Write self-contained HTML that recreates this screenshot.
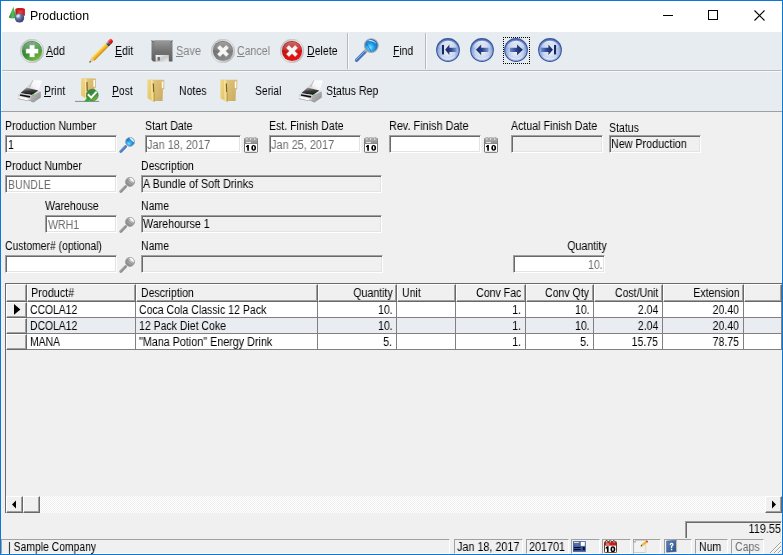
<!DOCTYPE html>
<html><head><meta charset="utf-8">
<style>
*{box-sizing:border-box;margin:0;padding:0}
html,body{width:783px;height:555px;overflow:hidden;background:#f0f0f0}
body{font-family:"Liberation Sans",sans-serif;font-size:12px;color:#000;position:relative}
#frame{position:absolute;left:0;top:0;width:783px;height:555px;border:1px solid #0a78d6;z-index:50}
#title{position:absolute;left:1px;top:1px;width:781px;height:31px;background:#fff}
#tb{position:absolute;left:2px;top:32px;width:779px;height:79px;background:#e7ecf0}
.hl{position:absolute;height:1px;background:#b9b9b9}
.vl{position:absolute;width:1px;background:#b9b9b9}
.t{position:absolute;will-change:transform;font-size:12px;line-height:14px;white-space:nowrap;transform-origin:0 0;display:block}
.g{color:#6c6c6c}
.g2{color:#838383}
.inp{position:absolute;background:#fff;border:1px solid;border-color:#a0a0a0 #fff #fff #a0a0a0;box-shadow:inset 1px 1px 0 #696969, inset -1px -1px 0 #e3e3e3}
.inp.ro{background:#f0f0f0}
.ic{position:absolute;z-index:5}
.cell{position:absolute;background:#fff;border-right:1px solid #808080;border-bottom:1px solid #808080}
.hd{position:absolute;background:#f0f0f0;border:1px solid;border-color:#fff #696969 #696969 #fff;box-shadow:inset -1px -1px 0 #a0a0a0}
.sp{position:absolute;top:539px;height:15px;border:1px solid;border-color:#a0a0a0 #fff #fff #a0a0a0}
.btn{position:absolute;background:#f0f0f0;border:1px solid;border-color:#fff #696969 #696969 #fff;box-shadow:inset -1px -1px 0 #a0a0a0}
</style></head><body>

<div id="title"></div>
<svg width="0" height="0" style="position:absolute"><defs>
<linearGradient id="ring" x1="0" y1="0" x2="1" y2="1"><stop offset="0" stop-color="#b0b0b0"/><stop offset=".5" stop-color="#f0f0f0"/><stop offset="1" stop-color="#a8a8a8"/></linearGradient>
<linearGradient id="gGreen" x1="0.2" y1="0" x2="0.8" y2="1"><stop offset="0" stop-color="#3c8446"/><stop offset=".55" stop-color="#3a8e36"/><stop offset="1" stop-color="#84c43e"/></linearGradient>
<linearGradient id="gRed" x1="0.3" y1="0" x2="0.7" y2="1"><stop offset="0" stop-color="#a81a1a"/><stop offset=".5" stop-color="#c81414"/><stop offset="1" stop-color="#f21010"/></linearGradient>
<linearGradient id="gGray" x1="0.3" y1="0" x2="0.7" y2="1"><stop offset="0" stop-color="#6a6a6a"/><stop offset=".5" stop-color="#777"/><stop offset="1" stop-color="#8e8e8e"/></linearGradient>
<linearGradient id="gGloss" x1="0" y1="0" x2="0" y2="1"><stop offset="0" stop-color="#fff" stop-opacity=".35"/><stop offset="1" stop-color="#fff" stop-opacity=".05"/></linearGradient>
<radialGradient id="navBg" cx=".5" cy=".6" r=".62"><stop offset="0" stop-color="#eef2fa"/><stop offset=".5" stop-color="#c6d4ee"/><stop offset=".78" stop-color="#87a3da"/><stop offset="1" stop-color="#4465ae"/></radialGradient>
<linearGradient id="navTop" x1="0" y1="0" x2="0" y2="1"><stop offset="0" stop-color="#fff" stop-opacity=".85"/><stop offset="1" stop-color="#fff" stop-opacity=".1"/></linearGradient>
<linearGradient id="arrL" x1="0" y1="0" x2="1" y2="0"><stop offset="0" stop-color="#16275e"/><stop offset=".5" stop-color="#2d448a"/><stop offset="1" stop-color="#7f9ad4"/></linearGradient>
<linearGradient id="arrR" x1="1" y1="0" x2="0" y2="0"><stop offset="0" stop-color="#16275e"/><stop offset=".5" stop-color="#2d448a"/><stop offset="1" stop-color="#6f8ccc"/></linearGradient>
<radialGradient id="lensB" cx=".4" cy=".65" r=".7"><stop offset="0" stop-color="#7fe4ff"/><stop offset=".45" stop-color="#1f9ae8"/><stop offset="1" stop-color="#0a55c0"/></radialGradient>
<radialGradient id="lensG" cx=".68" cy=".3" r=".8"><stop offset="0" stop-color="#dedede"/><stop offset=".45" stop-color="#a8a8a8"/><stop offset="1" stop-color="#7c7c7c"/></radialGradient>
<linearGradient id="pencil" x1="0" y1="0" x2="0" y2="1"><stop offset="0" stop-color="#fde48a"/><stop offset=".45" stop-color="#f6c02a"/><stop offset="1" stop-color="#c98a12"/></linearGradient>
<linearGradient id="eraser" x1="0" y1="0" x2="0" y2="1"><stop offset="0" stop-color="#ff7a7a"/><stop offset=".5" stop-color="#e81c1c"/><stop offset="1" stop-color="#b00c0c"/></linearGradient>
<linearGradient id="ferr" x1="0" y1="0" x2="0" y2="1"><stop offset="0" stop-color="#d8d8d8"/><stop offset=".5" stop-color="#50545c"/><stop offset="1" stop-color="#2c2f36"/></linearGradient>
<linearGradient id="flBody" x1="0" y1="0" x2="0" y2="1"><stop offset="0" stop-color="#8a8a8a"/><stop offset="1" stop-color="#5e5e5e"/></linearGradient>
<linearGradient id="flLab" x1="0" y1="0" x2="0" y2="1"><stop offset="0" stop-color="#9a9a9a"/><stop offset="1" stop-color="#6c6c6c"/></linearGradient>
<linearGradient id="flSh" x1="0" y1="0" x2="1" y2="1"><stop offset="0" stop-color="#fdfdfd"/><stop offset=".5" stop-color="#c8c8c8"/><stop offset="1" stop-color="#f4f4f4"/></linearGradient>
<linearGradient id="fFront" x1="0" y1="0" x2="1" y2="1"><stop offset="0" stop-color="#f1d88a"/><stop offset="1" stop-color="#e0bc5e"/></linearGradient>
<linearGradient id="fBack" x1="0" y1="0" x2="1" y2="1"><stop offset="0" stop-color="#e2c67c"/><stop offset="1" stop-color="#c9a95e"/></linearGradient>
<linearGradient id="prTop" x1="0.3" y1="0" x2="0.6" y2="1"><stop offset="0" stop-color="#a8a8a8"/><stop offset=".5" stop-color="#3c3c3c"/><stop offset="1" stop-color="#161616"/></linearGradient>
<linearGradient id="prSide" x1="0" y1="0" x2="1" y2="1"><stop offset="0" stop-color="#c8c8c8"/><stop offset="1" stop-color="#868686"/></linearGradient>
<linearGradient id="prFront" x1="0" y1="0" x2="0" y2="1"><stop offset="0" stop-color="#d2d2d2"/><stop offset="1" stop-color="#b0b0b0"/></linearGradient>
<linearGradient id="prPaper" x1="1" y1="0" x2="0" y2="1"><stop offset="0" stop-color="#ffffff"/><stop offset=".6" stop-color="#f6f6f6"/><stop offset="1" stop-color="#d0d0d0"/></linearGradient>
<linearGradient id="calH" x1="0" y1="0" x2="0" y2="1"><stop offset="0" stop-color="#b4b4b4"/><stop offset="1" stop-color="#868686"/></linearGradient>
<linearGradient id="bookB" x1="0" y1="0" x2="1" y2="1"><stop offset="0" stop-color="#5c86c0"/><stop offset="1" stop-color="#2c5288"/></linearGradient>
<linearGradient id="cardB" x1="0" y1="0" x2="0" y2="1"><stop offset="0" stop-color="#5573b8"/><stop offset="1" stop-color="#2f4a94"/></linearGradient>
<radialGradient id="sph" cx=".38" cy=".32" r=".75"><stop offset="0" stop-color="#c8cee0"/><stop offset=".45" stop-color="#5a6c9c"/><stop offset="1" stop-color="#28386a"/></radialGradient>
<linearGradient id="cone" x1="0" y1="0" x2="1" y2="0"><stop offset="0" stop-color="#1f7a2a"/><stop offset=".5" stop-color="#54c05a"/><stop offset="1" stop-color="#2a8a34"/></linearGradient>
<linearGradient id="cyl" x1="0" y1="0" x2="1" y2="0"><stop offset="0" stop-color="#b01010"/><stop offset=".5" stop-color="#f04040"/><stop offset="1" stop-color="#c01818"/></linearGradient>
</defs></svg>
<svg class="ic" style="left:8px;top:6px" width="18" height="18" viewBox="0 0 18 18"><path d="M7.4 3 Q12 0.8 16.9 3 L16.9 9.8 L7.4 9.8z" fill="url(#cyl)"/><path d="M7.4 3 Q12 0.8 16.9 3 Q12 6 7.4 3z" fill="#c81818"/><path d="M5.4 0.7 L8.4 11.4 Q4.6 13.4 0.8 11.4z" fill="url(#cone)"/><circle cx="11.5" cy="11.9" r="4.7" fill="url(#sph)"/><ellipse cx="10" cy="9.8" rx="2" ry="1.3" fill="#fff" opacity=".55" transform="rotate(-30 10 9.8)"/></svg>
<span class="t " style="left:29.7px;top:9px;transform:scaleX(1.03);font-size:12px">Production</span>
<div id="tb"></div>
<div style="position:absolute;left:1px;top:32px;width:1px;height:79px;background:#fff"></div>
<div class="hl" style="left:2px;top:70px;width:779px"></div><div class="hl" style="left:2px;top:71px;width:779px;background:#f6f8fa"></div>
<div class="hl" style="left:1px;top:111px;width:781px;background:#a0a0a0"></div>
<div class="vl" style="left:347px;top:33px;height:36px"></div><div class="vl" style="left:348px;top:33px;height:36px;background:#f8fafc"></div>
<div class="vl" style="left:425px;top:33px;height:36px"></div><div class="vl" style="left:426px;top:33px;height:36px;background:#f8fafc"></div>
<span class="t " style="left:46.2px;top:43.5px;transform:scaleX(0.88);"><u>A</u>dd</span>
<span class="t " style="left:115.0px;top:43.5px;transform:scaleX(0.88);"><u>E</u>dit</span>
<span class="t g2" style="left:176.2px;top:43.5px;transform:scaleX(0.91);"><u>S</u>ave</span>
<span class="t g2" style="left:237.4px;top:43.5px;transform:scaleX(0.88);"><u>C</u>ancel</span>
<span class="t " style="left:306.5px;top:43.5px;transform:scaleX(0.88);"><u>D</u>elete</span>
<span class="t " style="left:393.4px;top:43.5px;transform:scaleX(0.86);"><u>F</u>ind</span>
<span class="t " style="left:44.4px;top:83.5px;transform:scaleX(0.86);"><u>P</u>rint</span>
<span class="t " style="left:112.2px;top:83.5px;transform:scaleX(0.86);"><u>P</u>ost</span>
<span class="t " style="left:179.0px;top:83.5px;transform:scaleX(0.88);">Notes</span>
<span class="t " style="left:255.2px;top:83.5px;transform:scaleX(0.86);">Serial</span>
<span class="t " style="left:325.6px;top:83.5px;transform:scaleX(0.88);">S<u>t</u>atus Rep</span>
<svg class="ic" style="left:20px;top:39px" width="24" height="24" viewBox="0 0 24 24"><circle cx="12" cy="12" r="11.8" fill="url(#ring)"/><circle cx="12" cy="12" r="11.8" fill="none" stroke="#b4b4b4" stroke-width=".5"/><circle cx="12" cy="12" r="10.1" fill="url(#gGreen)"/><path d="M2.4 11 A9.7 9.7 0 0 1 21.6 11 Q12 14.5 2.4 11Z" fill="url(#gGloss)"/><path d="M9.8 6.2h4.6v3.7h3.7v4.4h-3.7v3.7H9.8v-3.7H6.1V9.9h3.7z" fill="#fff"/><path d="M9.8 6.2h4.6v3.7h3.7v4.4h-3.7v3.7H9.8v-3.7H6.1V9.9h3.7z" fill="none" stroke="#e8f0e0" stroke-width=".4"/></svg>
<svg class="ic" style="left:84px;top:34px" width="32" height="32" viewBox="0 0 32 32"><g transform="translate(5.2 28.7) rotate(-45.0)"><path d="M0 0 L5.2 -2.3 L5.2 2.3Z" fill="#e9c592"/><path d="M0 0 L1.9 -0.851 L1.9 0.851Z" fill="#3a3a3a"/><rect x="5.2" y="-2.3" width="20.0" height="4.6" fill="url(#pencil)"/><rect x="25.2" y="-2.3" width="2.9" height="4.6" fill="url(#ferr)"/><path d="M28.1 -2.3 h2.4 a2 2.3 0 0 1 0 4.6 h-2.4z" fill="url(#eraser)"/></g></svg>
<svg class="ic" style="left:151px;top:40px" width="22" height="22" viewBox="0 0 22 22"><path d="M0.5 0.5h21v21H2.2L0.5 19.8z" fill="url(#flBody)"/><path d="M0.5 0.5l2 2M21.5 0.5l-2 2" stroke="#555" stroke-width=".8"/><rect x="3.6" y="0.5" width="15.6" height="12.4" fill="url(#flLab)"/><rect x="4.6" y="15" width="13.2" height="7" fill="url(#flSh)"/><rect x="6.6" y="17" width="2.3" height="3.6" fill="#6a6a6a"/></svg>
<svg class="ic" style="left:211px;top:39px" width="24" height="24" viewBox="0 0 24 24"><circle cx="12" cy="12" r="11.8" fill="url(#ring)"/><circle cx="12" cy="12" r="11.8" fill="none" stroke="#b4b4b4" stroke-width=".5"/><circle cx="12" cy="12" r="10.1" fill="url(#gGray)"/><path d="M2.4 11 A9.7 9.7 0 0 1 21.6 11 Q12 14.5 2.4 11Z" fill="url(#gGloss)"/><g transform="rotate(45 12 12)"><path d="M10.3 5.9h3.4v4.4h4.4v3.4h-4.4v4.4h-3.4v-4.4H5.9v-3.4h4.4z" fill="#f6f6f6" stroke="#fff" stroke-width=".5" stroke-linejoin="round"/></g></svg>
<svg class="ic" style="left:280px;top:39px" width="24" height="24" viewBox="0 0 24 24"><circle cx="12" cy="12" r="11.8" fill="url(#ring)"/><circle cx="12" cy="12" r="11.8" fill="none" stroke="#b4b4b4" stroke-width=".5"/><circle cx="12" cy="12" r="10.1" fill="url(#gRed)"/><path d="M2.4 11 A9.7 9.7 0 0 1 21.6 11 Q12 14.5 2.4 11Z" fill="url(#gGloss)"/><g transform="rotate(45 12 12)"><path d="M10.3 5.9h3.4v4.4h4.4v3.4h-4.4v4.4h-3.4v-4.4H5.9v-3.4h4.4z" fill="#f6f6f6" stroke="#fff" stroke-width=".5" stroke-linejoin="round"/></g></svg>
<svg class="ic" style="left:354px;top:37.6px" width="26" height="26" viewBox="0 0 26 26"><g stroke-linecap="round"><path d="M11.5 13.2 L2.6 22.2" stroke="#4a74bc" stroke-width="3.4"/><path d="M11.3 12.6 L2.2 21.7" stroke="#8fb0e6" stroke-width="1"/></g><path d="M13.2 11.2 L11.2 13.4" stroke="#b8b0a8" stroke-width="2.6"/><circle cx="17.3" cy="7.6" r="6.9" fill="url(#lensB)" stroke="#b4a8a0" stroke-width="1.1"/><path d="M13.5 3.2 A6 6 0 0 1 22.6 6.2 Q19 2.6 13.5 3.2Z" fill="#fff" opacity=".85"/><path d="M12.2 5.2 L16.8 12.9" stroke="#0a48b0" stroke-width="1" opacity=".55"/></svg>
<svg class="ic" style="left:436px;top:38px" width="24" height="24" viewBox="0 0 24 24"><circle cx="12" cy="12" r="11.9" fill="#38559e"/><circle cx="12" cy="12" r="10.8" fill="url(#navBg)"/><path d="M3 9.5 A9.4 9.4 0 0 1 21 9.5 Q12 12.5 3 9.5Z" fill="url(#navTop)"/><path d="M4.2 17.5 A9.6 9.6 0 0 0 19.8 17.5 Q12 24.2 4.2 17.5Z" fill="#fff" opacity=".75"/><rect x="5.9" y="7" width="2.1" height="9.4" fill="#16275e"/><path d="M9.2 11.8 L13.4 6.6 V9.7 H20.6 V13.9 H13.4 V17Z" fill="url(#arrL)"/></svg>
<svg class="ic" style="left:470px;top:38px" width="24" height="24" viewBox="0 0 24 24"><circle cx="12" cy="12" r="11.9" fill="#38559e"/><circle cx="12" cy="12" r="10.8" fill="url(#navBg)"/><path d="M3 9.5 A9.4 9.4 0 0 1 21 9.5 Q12 12.5 3 9.5Z" fill="url(#navTop)"/><path d="M4.2 17.5 A9.6 9.6 0 0 0 19.8 17.5 Q12 24.2 4.2 17.5Z" fill="#fff" opacity=".75"/><path d="M6 11.8 L11.2 6.4 V9.7 H18.6 V13.9 H11.2 V17.2Z" fill="url(#arrL)"/></svg>
<svg class="ic" style="left:504px;top:38px" width="24" height="24" viewBox="0 0 24 24"><circle cx="12" cy="12" r="11.9" fill="#38559e"/><circle cx="12" cy="12" r="10.8" fill="url(#navBg)"/><path d="M3 9.5 A9.4 9.4 0 0 1 21 9.5 Q12 12.5 3 9.5Z" fill="url(#navTop)"/><path d="M4.2 17.5 A9.6 9.6 0 0 0 19.8 17.5 Q12 24.2 4.2 17.5Z" fill="#fff" opacity=".75"/><path d="M18.9 11.8 L13 6.4 V9.7 H5.8 V13.9 H13 V17.2Z" fill="url(#arrR)"/></svg>
<svg class="ic" style="left:538px;top:38px" width="24" height="24" viewBox="0 0 24 24"><circle cx="12" cy="12" r="11.9" fill="#38559e"/><circle cx="12" cy="12" r="10.8" fill="url(#navBg)"/><path d="M3 9.5 A9.4 9.4 0 0 1 21 9.5 Q12 12.5 3 9.5Z" fill="url(#navTop)"/><path d="M4.2 17.5 A9.6 9.6 0 0 0 19.8 17.5 Q12 24.2 4.2 17.5Z" fill="#fff" opacity=".75"/><rect x="16" y="7" width="2.1" height="9.4" fill="#16275e"/><path d="M14.9 11.8 L10.4 6.6 V9.7 H2.9 V13.9 H10.4 V17Z" fill="url(#arrR)"/></svg>
<div style="position:absolute;left:503px;top:37px;width:27px;height:27px;border:1px dotted #000"></div>
<svg class="ic" style="left:14px;top:76px" width="32" height="30" viewBox="0 0 32 30"><path d="M12.6 11.4 L17.4 6.6 L18.9 4.6 L15.8 11.6z" fill="#d0d0d0"/><path d="M18.9 4.3 L27.8 4.6 L26.6 8.4 L24.6 14.2 L15.5 11.4 L16.8 8.6z" fill="url(#prPaper)"/><path d="M18.9 4.3 L16.8 8.6 L15.5 11.4" stroke="#b0b0b0" stroke-width=".8" fill="none"/><path d="M23.8 14.7 L26.8 15.7 L26.8 21.6 L19.5 26.5 L16.2 24.9 L16.2 20 L18.4 18.4z" fill="url(#prSide)"/><path d="M18.6 17.6 L24.6 14.9 L26.6 15.6 L19.6 18.8z" fill="#e6eaf4" opacity=".85"/><path d="M12.6 11.4 L24.2 14.4 L18 18.9 L6.3 17.2z" fill="url(#prTop)"/><path d="M3.9 18.3 L6.3 17.2 L18 18.9 L16.2 20.2 L16.2 24.9 L3.9 22.3z" fill="#d6d6d6"/><path d="M6.2 18.3 L16.3 20.1 L15.7 21.7 L5.8 19.8z" fill="#101010"/><path d="M4.9 20.4 L14.7 22.4 L13.5 24.4 L4 22.3z" fill="#fcfcfc"/><path d="M4 22.3 L13.5 24.4 L16.2 24.2 L19.5 25.8 L19.5 26.5 L16.2 24.9 L13.4 25.1 L4 23z" fill="#9a9a9a"/><circle cx="18.9" cy="18.9" r=".9" fill="#62d050"/></svg>
<svg class="ic" style="left:75px;top:78px" width="25" height="25" viewBox="0 0 25 25"><g transform="translate(5.6 -0.4)"><path d="M6.2 0.7 L15.2 0.8 L15.2 10 L13.899999999999999 10.5 L13.6 20.8 L7.6 20.8 L7.4 13.8 L6.6 13.4z" fill="url(#fBack)"/><path d="M12.799999999999999 2.4 L14.399999999999999 2.4 L14.399999999999999 9.2 L12.799999999999999 9.2z" fill="#fdfdfd"/><path d="M0.4 0.6 L6.2 1.4 L6.6 13.4 L7.4 13.8 L7.2 21.8 L0.4 18.0z" fill="url(#fFront)"/><path d="M4 1.1 L5.5 1.3 L5.9 20.900000000000002 L4.6 20.3z" fill="#fcecac" opacity=".8"/><path d="M6.35 4.4 L6.7 13.3" stroke="#7a6428" stroke-width="1.2" fill="none"/><path d="M7.5 14 L7.4 21.400000000000002" stroke="#a88c40" stroke-width=".7" fill="none"/><path d="M0.4 0.6 L6.2 0.7 L6.2 1.4z" fill="#e6c874"/></g><rect x="0" y="22.9" width="24.2" height="1" fill="#8c8c8c"/><path d="M9 23.6 L12 20 L15 23.6z" fill="#28b028"/><circle cx="17.3" cy="17.1" r="5.9" fill="url(#gGreen)" stroke="#2c7a34" stroke-width=".7"/><path d="M13.6 17 L16.2 19.6 L21 14.4" stroke="#fff" stroke-width="2" fill="none" stroke-linecap="square"/></svg>
<svg class="ic" style="left:146.6px;top:78.6px" width="18" height="24" viewBox="0 0 18 24"><path d="M6.2 0.7 L17.2 0.8 L17.2 10 L15.899999999999999 10.5 L15.6 21.9 L7.6 21.9 L7.4 13.8 L6.6 13.4z" fill="url(#fBack)"/><path d="M14.799999999999999 2.4 L16.4 2.4 L16.4 9.2 L14.799999999999999 9.2z" fill="#fdfdfd"/><path d="M0.4 0.6 L6.2 1.4 L6.6 13.4 L7.4 13.8 L7.2 23.0 L0.4 19.2z" fill="url(#fFront)"/><path d="M4 1.1 L5.5 1.3 L5.9 22.1 L4.6 21.5z" fill="#fcecac" opacity=".8"/><path d="M6.35 4.4 L6.7 13.3" stroke="#7a6428" stroke-width="1.2" fill="none"/><path d="M7.5 14 L7.4 22.6" stroke="#a88c40" stroke-width=".7" fill="none"/><path d="M0.4 0.6 L6.2 0.7 L6.2 1.4z" fill="#e6c874"/></svg>
<svg class="ic" style="left:220.4px;top:78.6px" width="18" height="24" viewBox="0 0 18 24"><path d="M6.2 0.7 L17.2 0.8 L17.2 10 L15.899999999999999 10.5 L15.6 21.9 L7.6 21.9 L7.4 13.8 L6.6 13.4z" fill="url(#fBack)"/><path d="M14.799999999999999 2.4 L16.4 2.4 L16.4 9.2 L14.799999999999999 9.2z" fill="#fdfdfd"/><path d="M0.4 0.6 L6.2 1.4 L6.6 13.4 L7.4 13.8 L7.2 23.0 L0.4 19.2z" fill="url(#fFront)"/><path d="M4 1.1 L5.5 1.3 L5.9 22.1 L4.6 21.5z" fill="#fcecac" opacity=".8"/><path d="M6.35 4.4 L6.7 13.3" stroke="#7a6428" stroke-width="1.2" fill="none"/><path d="M7.5 14 L7.4 22.6" stroke="#a88c40" stroke-width=".7" fill="none"/><path d="M0.4 0.6 L6.2 0.7 L6.2 1.4z" fill="#e6c874"/></svg>
<svg class="ic" style="left:295px;top:76.2px" width="32" height="30" viewBox="0 0 32 30"><path d="M12.6 11.4 L17.4 6.6 L18.9 4.6 L15.8 11.6z" fill="#d0d0d0"/><path d="M18.9 4.3 L27.8 4.6 L26.6 8.4 L24.6 14.2 L15.5 11.4 L16.8 8.6z" fill="url(#prPaper)"/><path d="M18.9 4.3 L16.8 8.6 L15.5 11.4" stroke="#b0b0b0" stroke-width=".8" fill="none"/><path d="M23.8 14.7 L26.8 15.7 L26.8 21.6 L19.5 26.5 L16.2 24.9 L16.2 20 L18.4 18.4z" fill="url(#prSide)"/><path d="M18.6 17.6 L24.6 14.9 L26.6 15.6 L19.6 18.8z" fill="#e6eaf4" opacity=".85"/><path d="M12.6 11.4 L24.2 14.4 L18 18.9 L6.3 17.2z" fill="url(#prTop)"/><path d="M3.9 18.3 L6.3 17.2 L18 18.9 L16.2 20.2 L16.2 24.9 L3.9 22.3z" fill="#d6d6d6"/><path d="M6.2 18.3 L16.3 20.1 L15.7 21.7 L5.8 19.8z" fill="#101010"/><path d="M4.9 20.4 L14.7 22.4 L13.5 24.4 L4 22.3z" fill="#fcfcfc"/><path d="M4 22.3 L13.5 24.4 L16.2 24.2 L19.5 25.8 L19.5 26.5 L16.2 24.9 L13.4 25.1 L4 23z" fill="#9a9a9a"/><circle cx="18.9" cy="18.9" r=".9" fill="#62d050"/></svg>
<svg class="ic" style="left:655px;top:5px" width="120" height="22"><path d="M8 10.5h10" stroke="#000" stroke-width="1" fill="none"/><rect x="53.5" y="5.5" width="9" height="9" fill="none" stroke="#000" stroke-width="1"/><path d="M99.5 5.5l10 10M109.5 5.5l-10 10" stroke="#000" stroke-width="1.1" fill="none"/></svg>
<svg class="ic" style="left:119px;top:137px" width="16" height="16" viewBox="0 0 16 16"><g stroke-linecap="round"><path d="M6.6 9.6 L1.8 14.4" stroke="#4876bc" stroke-width="2.8"/><path d="M6.2 9.2 L1.4 14" stroke="#8fb4ea" stroke-width=".7"/></g><circle cx="11" cy="4.9" r="4.5" fill="url(#lensB)" stroke="#b0a49c" stroke-width=".8"/><path d="M10.2 0.9 A4.4 4.4 0 0 1 15.1 5.6 Q12.6 3.6 10.2 0.9Z" fill="#fff" opacity=".9"/><path d="M7.6 2.6 L11.6 6.2" stroke="#0a48b0" stroke-width=".8" opacity=".5"/></svg>
<svg class="ic" style="left:119px;top:177px" width="16" height="16" viewBox="0 0 16 16"><g stroke-linecap="round"><path d="M6.6 9.6 L1.8 14.4" stroke="#8c8c8c" stroke-width="2.8"/><path d="M6.2 9.2 L1.4 14" stroke="#c4c4c4" stroke-width=".7"/></g><circle cx="11" cy="4.9" r="4.5" fill="url(#lensG)" stroke="#9a9a9a" stroke-width=".8"/><path d="M10.2 0.9 A4.4 4.4 0 0 1 15.1 5.6 Q12.6 3.6 10.2 0.9Z" fill="#fff" opacity=".9"/><path d="M7.6 2.6 L12.6 6.4" stroke="#707070" stroke-width=".8" opacity=".5"/></svg>
<svg class="ic" style="left:119px;top:217px" width="16" height="16" viewBox="0 0 16 16"><g stroke-linecap="round"><path d="M6.6 9.6 L1.8 14.4" stroke="#8c8c8c" stroke-width="2.8"/><path d="M6.2 9.2 L1.4 14" stroke="#c4c4c4" stroke-width=".7"/></g><circle cx="11" cy="4.9" r="4.5" fill="url(#lensG)" stroke="#9a9a9a" stroke-width=".8"/><path d="M10.2 0.9 A4.4 4.4 0 0 1 15.1 5.6 Q12.6 3.6 10.2 0.9Z" fill="#fff" opacity=".9"/><path d="M7.6 2.6 L12.6 6.4" stroke="#707070" stroke-width=".8" opacity=".5"/></svg>
<svg class="ic" style="left:119px;top:257px" width="16" height="16" viewBox="0 0 16 16"><g stroke-linecap="round"><path d="M6.6 9.6 L1.8 14.4" stroke="#8c8c8c" stroke-width="2.8"/><path d="M6.2 9.2 L1.4 14" stroke="#c4c4c4" stroke-width=".7"/></g><circle cx="11" cy="4.9" r="4.5" fill="url(#lensG)" stroke="#9a9a9a" stroke-width=".8"/><path d="M10.2 0.9 A4.4 4.4 0 0 1 15.1 5.6 Q12.6 3.6 10.2 0.9Z" fill="#fff" opacity=".9"/><path d="M7.6 2.6 L12.6 6.4" stroke="#707070" stroke-width=".8" opacity=".5"/></svg>
<svg class="ic" style="left:244px;top:137px" width="14" height="16" viewBox="0 0 14 16"><rect x="0.5" y="1.3" width="13.1" height="14" rx="1" fill="#fff" stroke="#5e5e5e" stroke-width=".9"/><path d="M0.6 2 a.8 .8 0 0 1 .8 -.8 h11.2 a.8 .8 0 0 1 .8 .8 v4.9 h-12.8z" fill="url(#calH)"/><rect x="1.9" y="0.2" width="1.9" height="3.5" rx=".9" fill="#e4e4e4" stroke="#868686" stroke-width=".5"/><rect x="5.7" y="0.2" width="1.9" height="3.5" rx=".9" fill="#e4e4e4" stroke="#868686" stroke-width=".5"/><rect x="9.8" y="0.2" width="1.9" height="3.5" rx=".9" fill="#e4e4e4" stroke="#868686" stroke-width=".5"/><rect x="2.1" y="4.85" width="4.8" height="1" fill="#f4f4f4"/><path d="M2.0 9.200000000000001 L3.4000000000000004 7.9 H4.9 V13.7 H3.2 V9.8 L2.0 10.5z" fill="#000"/><path d="M9.7 7.9 a2.4 2.8999999999999995 0 0 1 0 5.799999999999999 a2.4 2.8999999999999995 0 0 1 0 -5.799999999999999z M9.7 9.1 a0.75 1.6999999999999995 0 0 0 0 3.399999999999999 a0.75 1.6999999999999995 0 0 0 0 -3.399999999999999z" fill="#000" fill-rule="evenodd"/></svg>
<svg class="ic" style="left:364px;top:137px" width="14" height="16" viewBox="0 0 14 16"><rect x="0.5" y="1.3" width="13.1" height="14" rx="1" fill="#fff" stroke="#5e5e5e" stroke-width=".9"/><path d="M0.6 2 a.8 .8 0 0 1 .8 -.8 h11.2 a.8 .8 0 0 1 .8 .8 v4.9 h-12.8z" fill="url(#calH)"/><rect x="1.9" y="0.2" width="1.9" height="3.5" rx=".9" fill="#e4e4e4" stroke="#868686" stroke-width=".5"/><rect x="5.7" y="0.2" width="1.9" height="3.5" rx=".9" fill="#e4e4e4" stroke="#868686" stroke-width=".5"/><rect x="9.8" y="0.2" width="1.9" height="3.5" rx=".9" fill="#e4e4e4" stroke="#868686" stroke-width=".5"/><rect x="2.1" y="4.85" width="4.8" height="1" fill="#f4f4f4"/><path d="M2.0 9.200000000000001 L3.4000000000000004 7.9 H4.9 V13.7 H3.2 V9.8 L2.0 10.5z" fill="#000"/><path d="M9.7 7.9 a2.4 2.8999999999999995 0 0 1 0 5.799999999999999 a2.4 2.8999999999999995 0 0 1 0 -5.799999999999999z M9.7 9.1 a0.75 1.6999999999999995 0 0 0 0 3.399999999999999 a0.75 1.6999999999999995 0 0 0 0 -3.399999999999999z" fill="#000" fill-rule="evenodd"/></svg>
<svg class="ic" style="left:484px;top:137px" width="14" height="16" viewBox="0 0 14 16"><rect x="0.5" y="1.3" width="13.1" height="14" rx="1" fill="#fff" stroke="#5e5e5e" stroke-width=".9"/><path d="M0.6 2 a.8 .8 0 0 1 .8 -.8 h11.2 a.8 .8 0 0 1 .8 .8 v4.9 h-12.8z" fill="url(#calH)"/><rect x="1.9" y="0.2" width="1.9" height="3.5" rx=".9" fill="#e4e4e4" stroke="#868686" stroke-width=".5"/><rect x="5.7" y="0.2" width="1.9" height="3.5" rx=".9" fill="#e4e4e4" stroke="#868686" stroke-width=".5"/><rect x="9.8" y="0.2" width="1.9" height="3.5" rx=".9" fill="#e4e4e4" stroke="#868686" stroke-width=".5"/><rect x="2.1" y="4.85" width="4.8" height="1" fill="#f4f4f4"/><path d="M2.0 9.200000000000001 L3.4000000000000004 7.9 H4.9 V13.7 H3.2 V9.8 L2.0 10.5z" fill="#000"/><path d="M9.7 7.9 a2.4 2.8999999999999995 0 0 1 0 5.799999999999999 a2.4 2.8999999999999995 0 0 1 0 -5.799999999999999z M9.7 9.1 a0.75 1.6999999999999995 0 0 0 0 3.399999999999999 a0.75 1.6999999999999995 0 0 0 0 -3.399999999999999z" fill="#000" fill-rule="evenodd"/></svg>
<svg class="ic" style="left:573px;top:541px" width="13" height="11" viewBox="0 0 13 11"><rect x="0" y="0" width="12.8" height="10.8" fill="url(#cardB)"/><rect x="1" y="0.9" width="4.8" height="1" fill="#f6f08a"/><rect x="7.8" y="0.9" width="4" height="4" fill="#fff"/><rect x="1" y="6" width="6.6" height="1" fill="#0c0c18"/><rect x="1" y="8" width="6.6" height="1" fill="#0c0c18"/><rect x="9.8" y="6" width="2" height="3" fill="#0c0c18"/><rect x="2.4" y="2.6" width="3" height="2.6" fill="#5a78bc" opacity=".6"/></svg>
<svg class="ic" style="left:604px;top:540px" width="13" height="13" viewBox="0 0 13 13"><rect x="0.5" y="1.6" width="12" height="11" rx=".8" fill="#fff" stroke="#5e3e24" stroke-width="1"/><rect x="1" y="1.8" width="11" height="3.8" fill="#c81c1c"/><rect x="2" y="0.3" width="1.4" height="2.4" fill="#e8e0d8" stroke="#4a3424" stroke-width=".4"/><rect x="5.6" y="0.3" width="1.4" height="2.4" fill="#e8e0d8" stroke="#4a3424" stroke-width=".4"/><rect x="9.2" y="0.3" width="1.4" height="2.4" fill="#e8e0d8" stroke="#4a3424" stroke-width=".4"/><rect x="2" y="3.6" width="3.4" height=".9" fill="#fff" opacity=".8"/><path d="M1.7 7.6 L3.0999999999999996 6.3 H4.6 V12.1 H2.8999999999999995 V8.2 L1.7 8.9z" fill="#000"/><path d="M8.9 6.3 a2.4 2.9 0 0 1 0 5.8 a2.4 2.9 0 0 1 0 -5.8z M8.9 7.5 a0.75 1.7 0 0 0 0 3.4 a0.75 1.7 0 0 0 0 -3.4z" fill="#000" fill-rule="evenodd"/></svg>
<svg class="ic" style="left:633px;top:540px" width="15" height="13" viewBox="0 0 15 13"><path d="M2.6 0.4 H12.4 V12.6 H0.6 V2.4z" fill="#f2f2f2" stroke="#b0b0b0" stroke-width=".6"/><path d="M0.6 2.4 L2.6 2.4 L2.6 0.4z" fill="#d0d0d0" stroke="#a0a0a0" stroke-width=".4"/><rect x="12.4" y="1.2" width="1.2" height="11.4" fill="#efe6cc"/><g transform="translate(7.6 6.3) rotate(-37)"><path d="M0 0 L1.6 -1.1 L1.6 1.1z" fill="#2a2a2a"/><rect x="1.6" y="-1.1" width="5.6" height="2.2" fill="#f0b820"/><rect x="7.2" y="-1.1" width="1.6" height="2.2" rx=".6" fill="#e03030"/></g></svg>
<svg class="ic" style="left:666px;top:540px" width="12" height="13" viewBox="0 0 12 13"><path d="M0.6 1 L10.4 0.2 L10.4 11.4 L0.6 12.2z" fill="url(#bookB)" stroke="#2a4a80" stroke-width=".5"/><path d="M10.4 0.4 L11.6 1 L11.6 11 L10.4 11.4z" fill="#efe6cc"/><path d="M3.6 5 Q3.6 2.8 5.6 2.8 Q7.6 2.8 7.6 4.6 Q7.6 5.8 6.2 6.4 V7.9 H4.9 V5.8 Q6.3 5.4 6.3 4.7 Q6.3 4 5.6 4 Q4.9 4 4.9 5z M4.9 8.8 H6.2 V10.2 H4.9z" fill="#fff"/></svg>
<span class="t " style="left:4.8px;top:119px;transform:scaleX(0.88);">Production Number</span>
<span class="t " style="left:144.8px;top:119px;transform:scaleX(0.88);">Start Date</span>
<span class="t " style="left:268.7px;top:119px;transform:scaleX(0.88);">Est. Finish Date</span>
<span class="t " style="left:388.7px;top:119px;transform:scaleX(0.905);">Rev. Finish Date</span>
<span class="t " style="left:510.7px;top:119px;transform:scaleX(0.885);">Actual Finish Date</span>
<span class="t " style="left:608.7px;top:121px;transform:scaleX(0.88);">Status</span>
<span class="t " style="left:4.8px;top:159px;transform:scaleX(0.88);">Product Number</span>
<span class="t " style="left:141.0px;top:159px;transform:scaleX(0.88);">Description</span>
<span class="t " style="left:44.7px;top:199px;transform:scaleX(0.88);">Warehouse</span>
<span class="t " style="left:141.0px;top:199px;transform:scaleX(0.88);">Name</span>
<span class="t " style="left:5.0px;top:239px;transform:scaleX(0.865);">Customer# (optional)</span>
<span class="t " style="left:141.0px;top:239px;transform:scaleX(0.88);">Name</span>
<span class="t " style="right:176px;top:239px;transform-origin:100% 0;transform:scaleX(0.88);">Quantity</span>
<div class="inp" style="left:5px;top:135px;width:112px;height:18px"></div>
<span class="t " style="left:7.7px;top:138px;transform:scaleX(0.88);">1</span>
<div class="inp" style="left:145px;top:135px;width:96px;height:18px"></div>
<span class="t g" style="left:147.2px;top:138px;transform:scaleX(0.91);">Jan 18, 2017</span>
<div class="inp" style="left:269px;top:135px;width:92px;height:18px"></div>
<span class="t g" style="left:271.2px;top:138px;transform:scaleX(0.91);">Jan 25, 2017</span>
<div class="inp" style="left:389px;top:135px;width:92px;height:18px"></div>
<div class="inp ro" style="left:511px;top:135px;width:92px;height:18px"></div>
<div class="inp ro" style="left:609px;top:135px;width:92px;height:18px"></div>
<span class="t " style="left:610.7px;top:137px;transform:scaleX(0.895);">New Production</span>
<div class="inp" style="left:5px;top:175px;width:112px;height:18px"></div>
<span class="t g" style="left:7.7px;top:178px;transform:scaleX(0.88);">BUNDLE</span>
<div class="inp ro" style="left:141px;top:175px;width:241px;height:18px"></div>
<span class="t " style="left:142.7px;top:177px;transform:scaleX(0.895);">A Bundle of Soft Drinks</span>
<div class="inp" style="left:45px;top:215px;width:72px;height:18px"></div>
<span class="t g" style="left:47.7px;top:218px;transform:scaleX(0.88);">WRH1</span>
<div class="inp ro" style="left:141px;top:215px;width:241px;height:18px"></div>
<span class="t " style="left:142.7px;top:217px;transform:scaleX(0.89);">Warehourse 1</span>
<div class="inp" style="left:5px;top:255px;width:112px;height:18px"></div>
<div class="inp ro" style="left:141px;top:255px;width:242px;height:18px"></div>
<div class="inp" style="left:513px;top:255px;width:92px;height:18px"></div>
<span class="t g" style="right:180.20000000000005px;top:258px;transform-origin:100% 0;transform:scaleX(0.88);">10.</span>
<div style="position:absolute;left:5px;top:283px;width:777px;height:230px;border-left:1px solid #696969;border-top:1px solid #696969;"></div>
<div class="hd" style="left:6px;top:284px;width:21px;height:18px"></div>
<div class="hd" style="left:27px;top:284px;width:109px;height:18px"></div>
<span class="t " style="left:31.0px;top:285.5px;transform:scaleX(0.9);">Product#</span>
<div class="hd" style="left:136px;top:284px;width:182px;height:18px"></div>
<span class="t " style="left:140.7px;top:285.5px;transform:scaleX(0.88);">Description</span>
<div class="hd" style="left:318px;top:284px;width:79px;height:18px"></div>
<span class="t " style="right:390.5px;top:285.5px;transform-origin:100% 0;transform:scaleX(0.88);">Quantity</span>
<div class="hd" style="left:397px;top:284px;width:59px;height:18px"></div>
<span class="t " style="left:401.7px;top:285.5px;transform:scaleX(0.88);">Unit</span>
<div class="hd" style="left:456px;top:284px;width:70px;height:18px"></div>
<span class="t " style="right:261.5px;top:285.5px;transform-origin:100% 0;transform:scaleX(0.88);">Conv Fac</span>
<div class="hd" style="left:526px;top:284px;width:68px;height:18px"></div>
<span class="t " style="right:193.5px;top:285.5px;transform-origin:100% 0;transform:scaleX(0.88);">Conv Qty</span>
<div class="hd" style="left:594px;top:284px;width:69px;height:18px"></div>
<span class="t " style="right:124.5px;top:285.5px;transform-origin:100% 0;transform:scaleX(0.88);">Cost/Unit</span>
<div class="hd" style="left:663px;top:284px;width:81px;height:18px"></div>
<span class="t " style="right:43.5px;top:285.5px;transform-origin:100% 0;transform:scaleX(0.88);">Extension</span>
<div class="hd" style="left:744px;top:284px;width:38px;height:18px"></div>
<div class="hd" style="left:6px;top:302px;width:21px;height:16px"></div>
<div class="cell" style="left:27px;top:302px;width:109px;height:16px;background:#fff"></div>
<span class="t " style="left:30.2px;top:303px;transform:scaleX(0.865);">CCOLA12</span>
<div class="cell" style="left:136px;top:302px;width:182px;height:16px;background:#fff"></div>
<span class="t " style="left:139.2px;top:303px;transform:scaleX(0.88);">Coca Cola Classic 12 Pack</span>
<div class="cell" style="left:318px;top:302px;width:79px;height:16px;background:#fff"></div>
<span class="t " style="right:390.5px;top:303px;transform-origin:100% 0;transform:scaleX(0.88);">10.</span>
<div class="cell" style="left:397px;top:302px;width:59px;height:16px;background:#fff"></div>
<div class="cell" style="left:456px;top:302px;width:70px;height:16px;background:#fff"></div>
<span class="t " style="right:261.5px;top:303px;transform-origin:100% 0;transform:scaleX(0.88);">1.</span>
<div class="cell" style="left:526px;top:302px;width:68px;height:16px;background:#fff"></div>
<span class="t " style="right:193.5px;top:303px;transform-origin:100% 0;transform:scaleX(0.88);">10.</span>
<div class="cell" style="left:594px;top:302px;width:69px;height:16px;background:#fff"></div>
<span class="t " style="right:124.5px;top:303px;transform-origin:100% 0;transform:scaleX(0.88);">2.04</span>
<div class="cell" style="left:663px;top:302px;width:81px;height:16px;background:#fff"></div>
<span class="t " style="right:43.5px;top:303px;transform-origin:100% 0;transform:scaleX(0.88);">20.40</span>
<div class="cell" style="left:744px;top:302px;width:38px;height:16px;background:#fff"></div>
<div class="hd" style="left:6px;top:318px;width:21px;height:16px"></div>
<div class="cell" style="left:27px;top:318px;width:109px;height:16px;background:#e9edf1"></div>
<span class="t " style="left:30.2px;top:319px;transform:scaleX(0.865);">DCOLA12</span>
<div class="cell" style="left:136px;top:318px;width:182px;height:16px;background:#e9edf1"></div>
<span class="t " style="left:139.2px;top:319px;transform:scaleX(0.875);">12 Pack Diet Coke</span>
<div class="cell" style="left:318px;top:318px;width:79px;height:16px;background:#e9edf1"></div>
<span class="t " style="right:390.5px;top:319px;transform-origin:100% 0;transform:scaleX(0.88);">10.</span>
<div class="cell" style="left:397px;top:318px;width:59px;height:16px;background:#e9edf1"></div>
<div class="cell" style="left:456px;top:318px;width:70px;height:16px;background:#e9edf1"></div>
<span class="t " style="right:261.5px;top:319px;transform-origin:100% 0;transform:scaleX(0.88);">1.</span>
<div class="cell" style="left:526px;top:318px;width:68px;height:16px;background:#e9edf1"></div>
<span class="t " style="right:193.5px;top:319px;transform-origin:100% 0;transform:scaleX(0.88);">10.</span>
<div class="cell" style="left:594px;top:318px;width:69px;height:16px;background:#e9edf1"></div>
<span class="t " style="right:124.5px;top:319px;transform-origin:100% 0;transform:scaleX(0.88);">2.04</span>
<div class="cell" style="left:663px;top:318px;width:81px;height:16px;background:#e9edf1"></div>
<span class="t " style="right:43.5px;top:319px;transform-origin:100% 0;transform:scaleX(0.88);">20.40</span>
<div class="cell" style="left:744px;top:318px;width:38px;height:16px;background:#e9edf1"></div>
<div class="hd" style="left:6px;top:334px;width:21px;height:16px"></div>
<div class="cell" style="left:27px;top:334px;width:109px;height:16px;background:#fff"></div>
<span class="t " style="left:30.2px;top:335px;transform:scaleX(0.865);">MANA</span>
<div class="cell" style="left:136px;top:334px;width:182px;height:16px;background:#fff"></div>
<span class="t " style="left:139.2px;top:335px;transform:scaleX(0.897);">"Mana Potion" Energy Drink</span>
<div class="cell" style="left:318px;top:334px;width:79px;height:16px;background:#fff"></div>
<span class="t " style="right:390.5px;top:335px;transform-origin:100% 0;transform:scaleX(0.88);">5.</span>
<div class="cell" style="left:397px;top:334px;width:59px;height:16px;background:#fff"></div>
<div class="cell" style="left:456px;top:334px;width:70px;height:16px;background:#fff"></div>
<span class="t " style="right:261.5px;top:335px;transform-origin:100% 0;transform:scaleX(0.88);">1.</span>
<div class="cell" style="left:526px;top:334px;width:68px;height:16px;background:#fff"></div>
<span class="t " style="right:193.5px;top:335px;transform-origin:100% 0;transform:scaleX(0.88);">5.</span>
<div class="cell" style="left:594px;top:334px;width:69px;height:16px;background:#fff"></div>
<span class="t " style="right:124.5px;top:335px;transform-origin:100% 0;transform:scaleX(0.88);">15.75</span>
<div class="cell" style="left:663px;top:334px;width:81px;height:16px;background:#fff"></div>
<span class="t " style="right:43.5px;top:335px;transform-origin:100% 0;transform:scaleX(0.88);">78.75</span>
<div class="cell" style="left:744px;top:334px;width:38px;height:16px;background:#fff"></div>
<svg class="ic" style="left:13px;top:303px" width="8" height="13"><path d="M1 1 L7.4 6.4 L1 11.8Z" fill="#000"/></svg>
<div style="position:absolute;left:6px;top:496px;width:776px;height:17px;background-color:#f8f8f8;background-image:conic-gradient(#fff 25%,#f0f0f0 0 50%,#fff 0 75%,#f0f0f0 0);background-size:2px 2px"></div>
<div class="btn" style="left:6px;top:496px;width:17px;height:17px"></div>
<div class="btn" style="left:23px;top:496px;width:17px;height:17px"></div>
<div class="btn" style="left:765px;top:496px;width:17px;height:17px"></div>
<svg class="ic" style="left:11px;top:500px" width="6" height="9"><path d="M5 0.5 L1 4.5 L5 8.5Z" fill="#000"/></svg>
<svg class="ic" style="left:771px;top:500px" width="6" height="9"><path d="M1 0.5 L5 4.5 L1 8.5Z" fill="#000"/></svg>
<div class="inp ro" style="left:685px;top:521px;width:97px;height:20px"></div>
<span class="t " style="right:2.5px;top:521.5px;transform-origin:100% 0;transform:scaleX(0.9);">119.55</span>
<div style="position:absolute;left:1px;top:538px;width:781px;height:16px;background:#f0f0f0"></div>
<div class="sp" style="left:1px;width:449px"></div>
<span class="t " style="left:7.8px;top:540px;transform:scaleX(0.865);">| Sample Company</span>
<div class="sp" style="left:454px;width:69px"></div>
<span class="t " style="left:457.2px;top:540px;transform:scaleX(0.9);">Jan 18, 2017</span>
<div class="sp" style="left:526px;width:43px"></div>
<span class="t " style="left:529.2px;top:540px;transform:scaleX(0.9);">201701</span>
<div class="sp" style="left:571px;width:29px"></div>
<div class="sp" style="left:602px;width:29px"></div>
<div class="sp" style="left:633px;width:28px"></div>
<div class="sp" style="left:664px;width:28px"></div>
<div class="sp" style="left:695px;width:33px"></div>
<span class="t " style="left:699.0px;top:540px;transform:scaleX(0.88);">Num</span>
<div class="sp" style="left:731px;width:33px"></div>
<span class="t g" style="left:734.8px;top:540px;transform:scaleX(0.88);">Caps</span>
<svg class="ic" style="left:768px;top:540px" width="14" height="14"><g stroke-width="1"><path d="M13 2L2 13M13 6L6 13M13 10L10 13" stroke="#a0a0a0"/><path d="M13 3L3 13M13 7L7 13M13 11L11 13" stroke="#fff"/></g></svg>
<div id="frame"></div>
</body></html>
